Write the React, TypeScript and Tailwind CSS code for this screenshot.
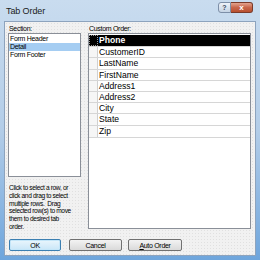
import React from "react";

const rows = [
  { name: "Phone", h: "h-[12px]", sel: true },
  { name: "CustomerID", h: "h-[11px]" },
  { name: "LastName", h: "h-[12px]" },
  { name: "FirstName", h: "h-[11px]" },
  { name: "Address1", h: "h-[11px]" },
  { name: "Address2", h: "h-[11px]" },
  { name: "City", h: "h-[11px]" },
  { name: "State", h: "h-[12px]" },
  { name: "Zip", h: "h-[12px]" },
];

const helpLines = [
  "Click to select a row, or",
  "click and drag to select",
  "multiple rows.\u00a0 Drag",
  "selected row(s) to move",
  "them to desired tab",
  "order.",
];

export default function App() {
  return (
    <div className="w-[260px] h-[260px] flex flex-col bg-linear-to-b from-[#c9dcef] via-[#b3cde8] to-[#6ea5dc] font-['Liberation_Sans',Arial,sans-serif] text-black overflow-hidden">
      {/* Title bar */}
      <div className="h-[21px] shrink-0 flex items-start">
        <span className="ml-[6px] mt-[6px] text-[9px] leading-[10px] text-[#1b1b1b] tracking-[-0.1px]">
          Tab Order
        </span>
        <div className="ml-auto mr-[7px] mt-[2px] flex">
          <div className="w-[13px] h-[11px] rounded-l-[3px] border border-[#7d8fa8] bg-linear-to-b from-[#eef3f9] to-[#c5d3e4] flex items-center justify-center text-[7px] leading-none font-bold text-[#3b4a5e]">
            ?
          </div>
          <div className="w-[22px] h-[11px] rounded-r-[3px] border border-l-0 border-[#7a3a2a] bg-linear-to-b from-[#e3a48f] via-[#c8664b] to-[#b8502f] flex items-center justify-center text-[8px] leading-none font-bold text-white">
            x
          </div>
        </div>
      </div>

      {/* Body */}
      <div className="ml-[4px] mr-[4px] mb-[4px] flex-1 flex flex-col border border-[#8da3bd] bg-[#f1f1f1] bg-[radial-gradient(circle,#e0e0e0_0.6px,transparent_0.8px)] bg-[length:3px_3px]">
        <div className="h-[209px] flex pt-[2px] pl-[3px] gap-[7px]">
          {/* Left column */}
          <div className="w-[73px] flex flex-col">
            <div className="h-[9px] text-[7px] leading-[9px] tracking-[-0.3px] pl-[1px]">Section:</div>
            <div className="h-[144px] border border-[#8a8f98] bg-white pt-[1px] text-[7px] leading-[8px] tracking-[-0.3px]">
              <div className="h-[8px] pl-[1px]">Form Header</div>
              <div className="h-[8px] pl-[1px] bg-[#a5cdf2]">Detail</div>
              <div className="h-[8px] pl-[1px]">Form Footer</div>
            </div>
            <div className="mt-[7px] pl-[1px] text-[6.6px] leading-[7.8px] tracking-[-0.35px] whitespace-nowrap">
              {helpLines.map((l) => (
                <div key={l}>{l}</div>
              ))}
            </div>
          </div>

          {/* Right column */}
          <div className="w-[163px] flex flex-col">
            <div className="h-[9px] text-[7px] leading-[9px] tracking-[-0.3px] pl-[1px]">Custom Order:</div>
            <div className="h-[196px] border border-[#8a8f98] bg-white pt-[1px]">
              {rows.map((r) => (
                <div
                  key={r.name}
                  className={`${r.h} flex border-b border-[#d6d6d6] ${r.sel ? "bg-black text-white" : ""}`}
                >
                  <div
                    className={`w-[9px] shrink-0 border-r ${
                      r.sel
                        ? "bg-black border border-dotted border-[#9a9a9a]"
                        : "bg-[#f6f6f6] border-[#d0d0d0]"
                    }`}
                  />
                  <div className={`pl-[1px] flex items-center text-[8.6px] leading-none ${r.sel ? "font-bold" : ""}`}>
                    {r.name}
                  </div>
                </div>
              ))}
            </div>
          </div>
        </div>

        {/* Buttons */}
        <div className="flex mt-[8px] pl-[4px]">
          <div className="w-[52px] h-[12px] rounded-[2px] border border-[#3c7fb1] shadow-[inset_0_0_0_1px_#c4e6f9] bg-linear-to-b from-[#eaf6fd] to-[#c9e6f8] flex items-center justify-center text-[7px] leading-none tracking-[-0.3px]">
            OK
          </div>
          <div className="ml-[8px] w-[53px] h-[12px] rounded-[2px] border border-[#707070] bg-linear-to-b from-[#f3f3f3] to-[#dadada] flex items-center justify-center text-[7px] leading-none tracking-[-0.3px]">
            Cancel
          </div>
          <div className="ml-[6px] w-[54px] h-[12px] rounded-[2px] border border-[#707070] bg-linear-to-b from-[#f3f3f3] to-[#dadada] flex items-center justify-center text-[7px] leading-none tracking-[-0.3px]">
            <span>
              <span className="underline">A</span>uto Order
            </span>
          </div>
        </div>
      </div>
    </div>
  );
}
